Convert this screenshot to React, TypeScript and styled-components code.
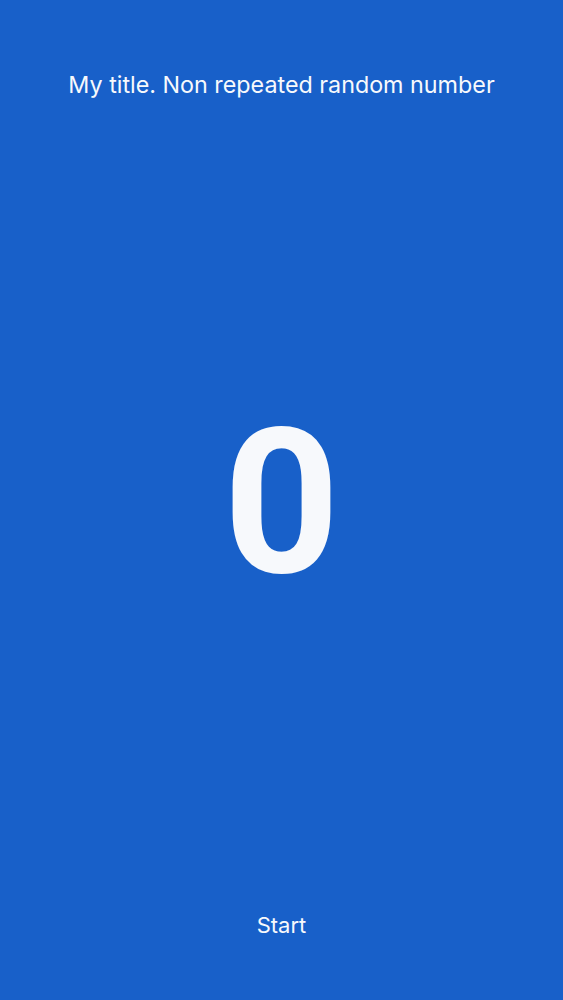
import React from 'react';
import styled, { createGlobalStyle } from 'styled-components';

const GlobalStyle = createGlobalStyle`
  html, body {
    margin: 0;
    padding: 0;
    background: #1860c9;
  }
  #root {
    height: 100vh;
  }
`

const Screen = styled.div`
  box-sizing: border-box;
  height: 100%;
  display: flex;
  flex-direction: column;
  align-items: center;
  justify-content: space-between;
  padding: 70px 0 60px;
  background: #1860c9;
  color: #f7f9fc;
  font-family: Inter, "Noto Sans", sans-serif;
`

const Title = styled.h1`
  margin: 0;
  font-size: 23.3px;
  font-weight: 400;
  line-height: 30px;
`

const Number = styled.div`
  font-family: Roboto, "Noto Sans", sans-serif;
  font-size: 203px;
  font-weight: 700;
  line-height: 1;
  margin-bottom: 4px;
`

const StartButton = styled.button`
  border: 0;
  background: none;
  color: inherit;
  font: inherit;
  font-size: 22px;
  line-height: 30px;
  padding: 0;
  cursor: pointer;
`

const App = () => {
    const [value] = React.useState(0);

    return (
        <>
            <GlobalStyle />
            <Screen>
                <Title>My title. Non repeated random number</Title>
                <Number>{value}</Number>
                <StartButton>Start</StartButton>
            </Screen>
        </>
    )
};

export default App;
